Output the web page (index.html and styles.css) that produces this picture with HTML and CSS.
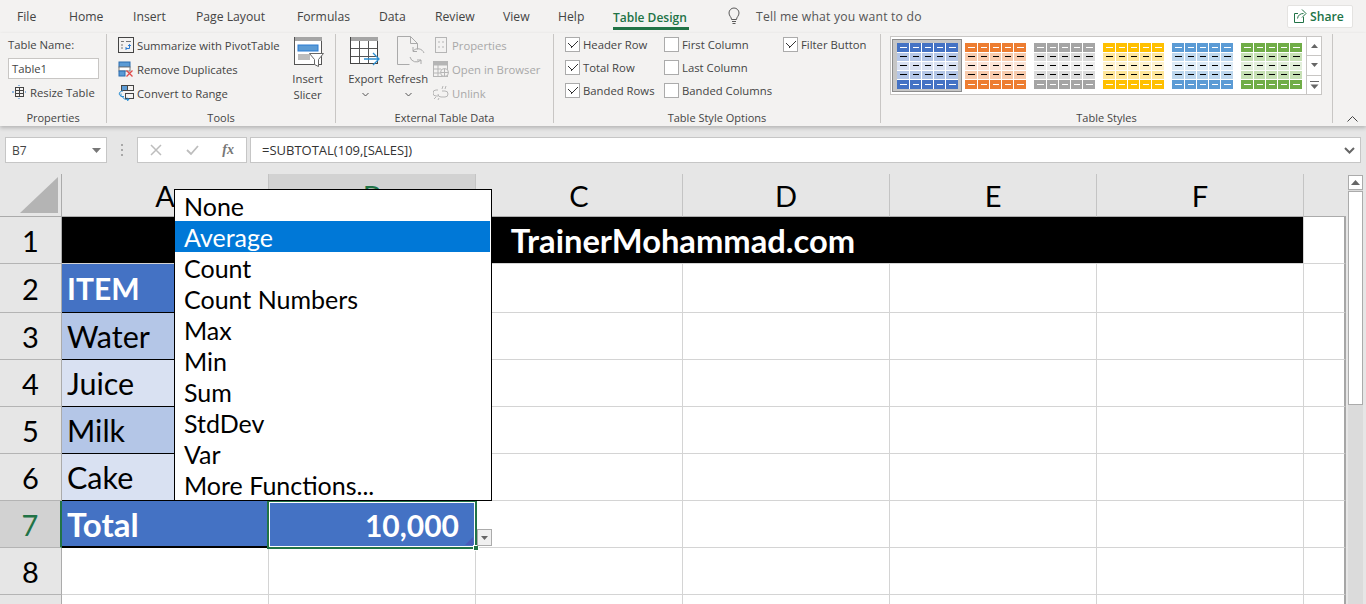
FILE: index.html
```html
<!DOCTYPE html>
<html lang="en">
<head>
  <meta charset="UTF-8">
  <meta name="viewport" content="width=device-width, initial-scale=1.0">
  <title>Table Design</title>
  <link rel="stylesheet" href="styles.css">
</head>
<body>
  <svg class="defs" width="0" height="0">
    <symbol id="swatch" viewBox="0 0 61 46">
      <rect width="61" height="46" fill="#fff"/>
      <g class="sw-head"><rect x="0" y="0" width="12" height="9"/><rect x="13" y="0" width="11" height="9"/><rect x="25" y="0" width="11" height="9"/><rect x="37" y="0" width="11" height="9"/><rect x="49" y="0" width="12" height="9"/></g>
      <g class="sw-band"><rect x="0" y="10" width="12" height="8"/><rect x="13" y="10" width="11" height="8"/><rect x="25" y="10" width="11" height="8"/><rect x="37" y="10" width="11" height="8"/><rect x="49" y="10" width="12" height="8"/></g>
      <g class="sw-light"><rect x="0" y="19" width="12" height="8"/><rect x="13" y="19" width="11" height="8"/><rect x="25" y="19" width="11" height="8"/><rect x="37" y="19" width="11" height="8"/><rect x="49" y="19" width="12" height="8"/></g>
      <g class="sw-band"><rect x="0" y="28" width="12" height="8"/><rect x="13" y="28" width="11" height="8"/><rect x="25" y="28" width="11" height="8"/><rect x="37" y="28" width="11" height="8"/><rect x="49" y="28" width="12" height="8"/></g>
      <g class="sw-head"><rect x="0" y="37" width="12" height="9"/><rect x="13" y="37" width="11" height="9"/><rect x="25" y="37" width="11" height="9"/><rect x="37" y="37" width="11" height="9"/><rect x="49" y="37" width="12" height="9"/></g>
      <path d="M3 4.500h7M16 4.500h6M28 4.500h6M40 4.500h6M52 4.500h7M3 41.500h7M16 41.500h6M28 41.500h6M40 41.500h6M52 41.500h7" stroke="#fff" fill="none"/>
      <path d="M3 13.500h7M16 13.500h6M28 13.500h6M40 13.500h6M52 13.500h7M3 22.500h7M16 22.500h6M28 22.500h6M40 22.500h6M52 22.500h7M3 31.500h7M16 31.500h6M28 31.500h6M40 31.500h6M52 31.500h7" stroke="#000" fill="none"/>
    </symbol>
  </svg>

  <nav class="tabs">
    <span class="tab tab-file">File</span>
    <span class="tab tab-home">Home</span>
    <span class="tab tab-insert">Insert</span>
    <span class="tab tab-layout">Page Layout</span>
    <span class="tab tab-formulas">Formulas</span>
    <span class="tab tab-data">Data</span>
    <span class="tab tab-review">Review</span>
    <span class="tab tab-view">View</span>
    <span class="tab tab-help">Help</span>
    <span class="tab tab-active">Table Design</span>
    <svg class="bulb" width="16" height="18" viewBox="0 0 16 18" fill="none" stroke="#5a5a5a"><path d="M5.500 12.500c0-2.500-2.500-3.500-2.500-6.500a5 5 0 0 1 10 0c0 3-2.500 4-2.500 6.500z"/><path d="M6 14.500h4M6.500 16.500h3"/></svg>
    <span class="tell">Tell me what you want to do</span>
    <span class="share">
      <svg width="13" height="14" viewBox="0 0 13 14" fill="none" stroke="#217346"><path d="M9.500 8v5.500H.5V4.500H4"/><path d="M3.500 9.500c.5-3.500 3-5 6-5"/><path d="M8 .5l4 4-4 4"/></svg>
      Share
    </span>
  </nav>

  <section class="ribbon">
    <div class="group group-props">
      <div class="group-body props-body">
        <span>Table Name:</span>
        <span class="name-input">Table1</span>
        <span class="cmd resize">
          <svg width="16" height="16" viewBox="0 0 16 16" fill="none" stroke="#444"><rect x="4.500" y="3.500" width="8" height="9"/><path d="M4.500 6.500h8M4.500 9.500h8M8.500 3.500v9"/><path d="M1 8h2M15 8h-1M8 1v1M8 15v-1" stroke="#2b7cd3"/></svg>
          Resize Table
        </span>
      </div>
      <div class="group-label">Properties</div>
    </div>

    <div class="group group-tools">
      <div class="group-body tools-body">
        <div class="cmd-list">
          <span class="cmd">
            <svg width="16" height="16" viewBox="0 0 16 16" fill="none" stroke="#444"><rect x=".5" y=".5" width="15" height="15"/><path d="M3 4.500h3M8 4.500h5M3 8h2M3 11h2" stroke="#777"/><path d="M8 11.500h3.500v-4M10 9l1.500-1.500L13 9M8 10v3" stroke="#2b7cd3"/></svg>
            Summarize with PivotTable
          </span>
          <span class="cmd">
            <svg width="16" height="16" viewBox="0 0 16 16"><rect x="1" y="1" width="11" height="5" fill="#5b9bd5" stroke="#2b6cb0"/><rect x="1" y="6" width="11" height="4" fill="#fff" stroke="#777"/><rect x="1" y="10" width="6" height="5" fill="#5b9bd5" stroke="#2b6cb0"/><path d="M8.500 9.500l6 6M14.500 9.500l-6 6" stroke="#e04b4b" stroke-width="1.300"/></svg>
            Remove Duplicates
          </span>
          <span class="cmd">
            <svg width="16" height="16" viewBox="0 0 16 16" fill="none"><rect x="3.500" y=".5" width="6" height="5" fill="#5b9bd5" stroke="#444"/><rect x="9.500" y=".5" width="6" height="5" stroke="#444"/><rect x="7.500" y="8.500" width="8" height="5" stroke="#444"/><path d="M5 6C1 6 0 10 3 11M3 8.500V11.500H6M4 11c1 3 4 4 7 3.500M9 12.500l2 2-2 1.500" stroke="#2b8fd3"/></svg>
            Convert to Range
          </span>
        </div>
        <div class="big-cmd slicer">
          <svg width="30" height="32" viewBox="0 0 30 32" fill="none"><rect x=".5" y="1.500" width="27" height="27" stroke="#555" fill="#fff"/><rect x="1" y="1" width="27" height="4" fill="#a5a5a5"/><rect x="4" y="9" width="20" height="6" fill="#5b9bd5" stroke="#2b7cd3"/><rect x="4" y="18" width="12" height="6" fill="#bdbdbd"/><path d="M15.500 17.500h14l-5 6v7l-4-2v-5z" fill="#fff" stroke="#666"/></svg>
          <span>Insert</span>
          <span>Slicer</span>
        </div>
      </div>
      <div class="group-label">Tools</div>
    </div>

    <div class="group group-external">
      <div class="group-body external-body">
        <div class="big-cmd export">
          <svg width="31" height="30" viewBox="0 0 31 30" fill="none"><rect x=".5" y="1.500" width="27" height="26" stroke="#444" fill="#fff"/><rect x="1" y="1" width="27" height="4" fill="#a5a5a5"/><path d="M9.500 5v22M18.500 5v22M1 12.500h26M1 20.500h26" stroke="#555"/><path d="M14 23h15M23 17l6 6-6 6" stroke="#2b8fd3" stroke-width="1.300"/></svg>
          <span>Export</span>
          <svg class="chev" width="7" height="5" viewBox="0 0 7 5" fill="none" stroke="#555"><path d="M.5 1l3 3 3-3"/></svg>
        </div>
        <div class="big-cmd refresh">
          <svg class="refresh-icon" width="29" height="30" viewBox="0 0 29 30" fill="none" stroke="#aaa"><path d="M.5 28.500V.5h13l7 7v6M13.500.5v7h7M.5 28.500h12"/><path d="M27 17a6.500 6.500 0 0 0-11-2M13 21a6.500 6.500 0 0 0 11 3M16 11v4.500h4M24 28v-4h-4"/></svg>
          <span>Refresh</span>
          <svg class="chev" width="7" height="5" viewBox="0 0 7 5" fill="none" stroke="#555"><path d="M.5 1l3 3 3-3"/></svg>
        </div>
        <div class="cmd-list muted">
          <span class="cmd">
            <svg width="16" height="16" viewBox="0 0 16 16" fill="none" stroke="#b5b5b5"><rect x="2.500" y=".5" width="11" height="15"/><path d="M5 5h2M9 5h2M5 10h2M9 10h2"/></svg>
            Properties
          </span>
          <span class="cmd">
            <svg width="16" height="16" viewBox="0 0 16 16" fill="none" stroke="#b5b5b5"><rect x=".5" y=".5" width="14" height="15"/><rect x="1" y="1" width="13" height="3" fill="#b5b5b5"/><path d="M5 4v11M1 8h7M1 12h6"/><circle cx="11.500" cy="11.500" r="4" fill="#f3f2f1"/><path d="M7.500 11.500h8M11.500 7.500v8"/></svg>
            Open in Browser
          </span>
          <span class="cmd">
            <svg width="16" height="16" viewBox="0 0 16 16" fill="none" stroke="#b5b5b5"><path d="M5 5H3a3 3 0 0 0 0 6h2M9 6h3a3 3 0 0 1 0 6H8a3 3 0 0 1-3-3"/><path d="M10 1l-1 3M13 1l-1 3M1 14l2-2M5 15l1-2"/></svg>
            Unlink
          </span>
        </div>
      </div>
      <div class="group-label">External Table Data</div>
    </div>

    <div class="group group-options">
      <div class="group-body options-body">
        <span class="check on">Header Row</span>
        <span class="check">First Column</span>
        <span class="check on">Filter Button</span>
        <span class="check on">Total Row</span>
        <span class="check">Last Column</span>
        <span></span>
        <span class="check on">Banded Rows</span>
        <span class="check">Banded Columns</span>
      </div>
      <div class="group-label">Table Style Options</div>
    </div>

    <div class="group group-styles">
      <div class="group-body styles-body">
        <div class="gallery">
          <div class="swatches">
            <span class="swatch selected blue"><svg width="61" height="46"><use href="#swatch"/></svg></span>
            <span class="swatch orange"><svg width="61" height="46"><use href="#swatch"/></svg></span>
            <span class="swatch gray"><svg width="61" height="46"><use href="#swatch"/></svg></span>
            <span class="swatch gold"><svg width="61" height="46"><use href="#swatch"/></svg></span>
            <span class="swatch sky"><svg width="61" height="46"><use href="#swatch"/></svg></span>
            <span class="swatch green"><svg width="61" height="46"><use href="#swatch"/></svg></span>
          </div>
          <div class="gallery-btns">
            <span><svg width="7" height="4" viewBox="0 0 7 4"><path d="M3.500 0L7 4H0z" fill="#666"/></svg></span>
            <span><svg width="7" height="4" viewBox="0 0 7 4"><path d="M0 0h7L3.500 4z" fill="#666"/></svg></span>
            <span><svg width="9" height="8" viewBox="0 0 9 8"><path d="M0 0h9v1H0z" fill="#666"/><path d="M.5 3.500h8L4.500 8z" fill="#666"/></svg></span>
          </div>
        </div>
      </div>
      <div class="group-label">Table Styles</div>
    </div>

    <svg class="collapse" width="11" height="6" viewBox="0 0 11 6" fill="none" stroke="#444"><path d="M.5 5.500l5-5 5 5"/></svg>
  </section>

  <section class="formula-bar">
    <div class="name-box">B7<svg width="9" height="5" viewBox="0 0 9 5"><path d="M0 0h9L4.500 5z" fill="#777"/></svg></div>
    <span class="grip"></span>
    <div class="fx-box">
      <svg width="12" height="12" viewBox="0 0 12 12" fill="none" stroke="#bdbdbd" stroke-width="1.500"><path d="M1 1l10 10M11 1L1 11"/></svg>
      <svg width="13" height="12" viewBox="0 0 13 12" fill="none" stroke="#bdbdbd" stroke-width="1.800"><path d="M1 6l4 4 7-8"/></svg>
      <i class="fx">fx</i>
    </div>
    <div class="formula">=SUBTOTAL(109,[SALES])<svg width="11" height="7" viewBox="0 0 11 7" fill="none" stroke="#666" stroke-width="2"><path d="M1 1l4.500 4.500L10 1"/></svg></div>
  </section>

  <main class="sheet">
    <div class="sheet-grid">
      <table class="cells">
        <colgroup><col class="c-head"><col class="c-col"><col class="c-col"><col class="c-col"><col class="c-col"><col class="c-col"><col class="c-col"><col class="c-rest"></colgroup>
        <tr class="r-head">
          <th class="corner"><svg width="38" height="36" viewBox="0 0 38 36"><path d="M38 0v36H0z" fill="#b4b4b4"/></svg></th>
          <th>A</th><th class="col-sel">B</th><th>C</th><th>D</th><th>E</th><th>F</th><th class="blank"></th>
        </tr>
        <tr class="r-1"><th>1</th><td class="title" colspan="6">TrainerMohammad.com</td><td></td></tr>
        <tr class="r-2"><th>2</th><td class="t-head">ITEM</td><td class="t-head"></td><td></td><td></td><td></td><td></td><td></td></tr>
        <tr><th>3</th><td class="band">Water</td><td class="band"></td><td></td><td></td><td></td><td></td><td></td></tr>
        <tr><th>4</th><td class="light">Juice</td><td class="light"></td><td></td><td></td><td></td><td></td><td></td></tr>
        <tr><th>5</th><td class="band">Milk</td><td class="band"></td><td></td><td></td><td></td><td></td><td></td></tr>
        <tr><th>6</th><td class="light">Cake</td><td class="light"></td><td></td><td></td><td></td><td></td><td></td></tr>
        <tr><th class="row-sel">7</th><td class="t-total">Total</td><td class="t-total amount">10,000<span class="corner-mark"></span><span class="handle"></span><span class="filter"><svg width="7" height="4" viewBox="0 0 7 4"><path d="M0 0h7L3.500 4z" fill="#666"/></svg></span></td><td></td><td></td><td></td><td></td><td></td></tr>
        <tr><th>8</th><td></td><td></td><td></td><td></td><td></td><td></td><td></td></tr>
        <tr><th></th><td></td><td></td><td></td><td></td><td></td><td></td><td></td></tr>
      </table>

      <ul class="total-menu">
        <li>None</li>
        <li class="hover">Average</li>
        <li>Count</li>
        <li>Count Numbers</li>
        <li>Max</li>
        <li>Min</li>
        <li>Sum</li>
        <li>StdDev</li>
        <li>Var</li>
        <li>More Functions...</li>
      </ul>
    </div>

    <aside class="scrollbar">
      <span class="scroll-up"><svg width="9" height="5" viewBox="0 0 9 5"><path d="M4.500 0L9 5H0z" fill="#666"/></svg></span>
      <span class="scroll-thumb"></span>
    </aside>
  </main>
</body>
</html>
```

FILE: styles.css
```css
* {
  box-sizing: border-box;
}

html, body {
  height: 604px;
  overflow: hidden;
}

body {
  margin: 0;
  font-family: "Open Sans", "Noto Sans", sans-serif;
  font-size: 11.3px;
  color: #444;
  background-color: #e6e6e6;
}

.defs {
  position: absolute;
}

/* title row with the tabs */
.tabs {
  display: flex;
  align-items: center;
  height: 33px;
  padding-left: 17px;
  padding-bottom: 1px;
  background-color: #f3f2f1;
  font-size: 12.2px;
}

.tab {
  flex: none;
  white-space: nowrap;
}

.tab-file { width: 52px; }
.tab-home { width: 64px; }
.tab-insert { width: 63px; }
.tab-layout { width: 101px; }
.tab-formulas { width: 82px; }
.tab-data { width: 56px; }
.tab-review { width: 68px; }
.tab-view { width: 55px; }
.tab-help { width: 55px; }

.tab-active {
  width: 76px;
  height: 27px;
  margin-top: 1px;
  padding-top: 6px;
  border-bottom: 3px solid #217346;
  color: #217346;
  font-weight: 600;
  font-size: 12px;
}

.bulb {
  flex: none;
  margin-left: 37px;
}

.tell {
  margin-left: 14px;
  letter-spacing: .2px;
  color: #555;
}

.share {
  display: flex;
  align-items: center;
  gap: 3px;
  width: 66px;
  height: 23px;
  margin-left: auto;
  margin-right: 13px;
  padding-left: 6px;
  background-color: #fff;
  border: 1px solid #e4e3e1;
  border-radius: 2px;
  color: #217346;
  font-weight: 600;
}

/* ribbon */
.ribbon {
  position: relative;
  display: flex;
  height: 93px;
  background-color: #f3f2f1;
  box-shadow: 0 2px 4px rgba(0, 0, 0, .22);
}

.group {
  flex: none;
  display: flex;
  flex-direction: column;
  height: 89px;
  margin-top: 1px;
  border-right: 1px solid #c8c6c4;
}

.group-body {
  flex: 1;
}

.group-label {
  height: 12px;
  text-align: center;
  font-size: 11px;
  line-height: 14px;
}

.group-props { width: 107px; }
.group-tools { width: 229px; }
.group-external { width: 218px; }
.group-options { width: 327px; }
.group-styles { width: 452px; }

.props-body {
  display: flex;
  flex-direction: column;
  padding: 3px 0 0 8px;
}

.name-input {
  width: 91px;
  height: 21px;
  margin-top: 6px;
  padding: 2px 3px;
  background-color: #fff;
  border: 1px solid #c8c6c4;
}

.cmd {
  display: flex;
  align-items: center;
  gap: 3px;
  height: 24px;
  white-space: nowrap;
}

.resize {
  margin: 1px 0 0 3px;
}

.tools-body {
  display: flex;
  padding-left: 11px;
}

.cmd-list {
  display: flex;
  flex-direction: column;
  margin-top: -1px;
}

.big-cmd {
  display: flex;
  flex-direction: column;
  align-items: center;
  line-height: 16px;
}

.big-cmd svg {
  margin-bottom: 5px;
}

.slicer {
  margin-left: 12px;
  padding-top: 2px;
}

.slicer svg {
  margin: 0 0 3px 2px;
}

.external-body {
  display: flex;
  padding: 2px 0 0 11px;
}

.export {
  width: 37px;
}

.refresh {
  width: 44px;
  margin-left: 2px;
}

.big-cmd .refresh-icon {
  margin-left: 6px;
}

.big-cmd .chev {
  margin: 5px 0 0;
}

.muted {
  margin: -3px 0 0 3px;
  color: #a8a8a8;
}

.options-body {
  display: grid;
  grid-template-columns: 99px 119px auto;
  grid-auto-rows: 23px;
  align-content: start;
  margin-top: -1px;
  padding: 0 0 0 11px;
}

.check {
  display: flex;
  align-items: center;
  gap: 3px;
  white-space: nowrap;
}

.check::before {
  content: "";
  flex: none;
  width: 13px;
  height: 13px;
  background: #fff center no-repeat;
  border: 1px solid #ababab;
}

.check.on::before {
  background-image: linear-gradient(45deg, transparent 38%, #333 38%, #333 48%, transparent 48%), linear-gradient(-45deg, transparent 38%, #333 38%, #333 48%, transparent 48%);
  background-size: 5px 5px, 8px 8px;
  background-position: 2px 4px, 4px 2px;
}

.styles-body {
  padding: 2px 0 0 9px;
}

.gallery {
  display: flex;
  width: 432px;
  height: 59px;
  background-color: #fff;
  border: 1px solid #c8c6c4;
}

.swatches {
  display: flex;
  flex: 1;
  gap: 8px;
  padding: 2px 0 0 1px;
}

.swatch {
  display: flex;
  flex: none;
  align-items: center;
  justify-content: center;
  width: 61px;
  height: 53px;
}

.swatch.selected {
  width: 70px;
  margin-right: -5px;
  background-color: #c6c6c6;
  border: 1px solid #8c8c8c;
}

.blue { --head: #4472c4; --band: #b4c6e7; --light: #d9e1f2; }
.orange { --head: #ed7d31; --band: #f8cbad; --light: #fce4d6; }
.gray { --head: #a5a5a5; --band: #dbdbdb; --light: #ededed; }
.gold { --head: #ffc000; --band: #ffe699; --light: #fff2cc; }
.sky { --head: #5b9bd5; --band: #bdd7ee; --light: #ddebf7; }
.green { --head: #70ad47; --band: #c6e0b4; --light: #e2efda; }

.sw-head { fill: var(--head); }
.sw-band { fill: var(--band); }
.sw-light { fill: var(--light); }

.gallery-btns {
  display: flex;
  flex: none;
  flex-direction: column;
  width: 15px;
  border-left: 1px solid #c8c6c4;
}

.gallery-btns span {
  display: flex;
  align-items: center;
  justify-content: center;
  flex: 1;
  border-bottom: 1px solid #c8c6c4;
}

.gallery-btns span:last-child {
  border-bottom: 0;
}

.collapse {
  position: absolute;
  right: 8px;
  bottom: 4px;
}

/* formula bar */
.formula-bar {
  display: flex;
  height: 26px;
  margin: 11px 5px 0;
}

.name-box, .fx-box, .formula {
  display: flex;
  align-items: center;
  background-color: #fff;
  border: 1px solid #c6c6c6;
}

.name-box {
  justify-content: space-between;
  width: 102px;
  padding: 0 5px 0 6px;
  font-size: 12px;
}

.grip {
  width: 2px;
  height: 13px;
  margin: 7px 14px 0;
  background: repeating-linear-gradient(#a8a8a8 0 2px, transparent 2px 5px);
}

.fx-box {
  justify-content: space-between;
  width: 110px;
  padding: 0 12px 0 12px;
}

.fx {
  font-family: "Liberation Serif", serif;
  font-size: 14px;
  font-weight: bold;
  color: #777;
}

.formula {
  flex: 1;
  justify-content: space-between;
  margin-left: 3px;
  padding: 0 5px 0 11px;
  font-size: 13px;
  color: #333;
}

/* worksheet */
.sheet {
  display: flex;
  margin-top: 11px;
}

.sheet-grid {
  position: relative;
  width: 1346px;
  height: 430px;
  overflow: hidden;
}

.cells {
  table-layout: fixed;
  width: 1346px;
  border-collapse: separate;
  border-spacing: 0;
  background-color: #fff;
  font-family: Lato, "Liberation Sans", sans-serif;
  font-size: 29px;
  color: #000;
}

.c-head { width: 62px; }
.c-col { width: 207px; }
.c-rest { width: 42px; }

.cells tr {
  height: 47px;
}

.cells .r-head {
  height: 43px;
}

.cells .r-2 {
  height: 49px;
}

.cells th {
  padding: 0;
  background-color: #e6e6e6;
  border-right: 1px solid #ababab;
  border-bottom: 1px solid #b4b4b4;
  font-weight: normal;
}

.r-head th {
  border-right-color: #c4c4c4;
  border-bottom-color: #ababab;
}

.cells .corner {
  border-right-color: #ababab;
  vertical-align: middle;
  text-align: right;
  padding-right: 3px;
}

.corner svg {
  display: block;
  margin-left: auto;
}

.cells .col-sel {
  background-color: #d2d2d2;
  color: #217346;
}

.cells .row-sel {
  background-color: #d2d2d2;
  border-right: 2px solid #217346;
  color: #217346;
}

.cells .blank {
  border-right: 0;
}

.cells td {
  padding: 0 5px;
  border-right: 1px solid #d4d4d4;
  border-bottom: 1px solid #d4d4d4;
  white-space: nowrap;
  font-size: 30.5px;
}

.cells td:last-child {
  border-right: 2px solid #a6a6a6;
}

.cells .title {
  padding: 0 0 0 1px;
  background-color: #000;
  text-align: center;
  color: #fff;
  font-size: 32.7px;
  font-weight: bold;
}

.cells .t-head,
.cells .t-total {
  background-color: #4472c4;
  border-right: 0;
  border-bottom-color: #000;
  color: #fff;
  font-size: 30px;
  font-weight: bold;
}

.cells .band,
.cells .light {
  border-right-color: #000;
  border-bottom-color: #000;
}

.cells .band { background-color: #b4c6e7; }
.cells .light { background-color: #d9e1f2; }

.cells .t-total {
  border-bottom: 2px solid #000;
  font-size: 33px;
}

.cells .amount {
  position: relative;
  padding-right: 17px;
  text-align: right;
  border-bottom: 0;
  font-size: 30px;
}

/* selection frame of the active cell */
.cells .amount::after {
  content: "";
  position: absolute;
  top: -1px;
  right: -1px;
  bottom: -1px;
  left: -2px;
  border: 2px solid #217346;
  box-shadow: inset 0 0 0 1px #fff;
}

.corner-mark {
  position: absolute;
  right: 3px;
  bottom: 3px;
  border-style: solid;
  border-width: 0 0 8px 8px;
  border-color: transparent transparent #4a5ab8 transparent;
}

.handle {
  position: absolute;
  z-index: 1;
  right: -3px;
  bottom: -3px;
  width: 6px;
  height: 6px;
  background-color: #217346;
  border: 1px solid #fff;
}

.filter {
  position: absolute;
  z-index: 1;
  left: 100%;
  bottom: 2px;
  margin-left: 1px;
  display: flex;
  align-items: center;
  justify-content: center;
  width: 15px;
  height: 17px;
  background-color: #f0f0f0;
  border: 1px solid #ababab;
}

.total-menu {
  position: absolute;
  z-index: 2;
  top: 15px;
  left: 174px;
  width: 318px;
  margin: 0;
  padding: 0;
  list-style: none;
  background-color: #fff;
  border: 1px solid #000;
  font-family: Lato, "Liberation Sans", sans-serif;
  font-size: 25px;
  color: #000;
}

.total-menu li {
  height: 31px;
  margin-right: 1px;
  padding: 1px 0 0 9px;
  line-height: 30px;
  white-space: nowrap;
}

.total-menu .hover {
  background-color: #0078d7;
  color: #fff;
}

.scrollbar {
  display: flex;
  flex-direction: column;
  width: 15px;
  height: 430px;
  margin: 1px 0 0 2px;
  background-color: #dbdbdb;
}

.scroll-up {
  display: flex;
  align-items: center;
  justify-content: center;
  height: 15px;
  background-color: #fff;
  border: 1px solid #ababab;
}

.scroll-thumb {
  height: 214px;
  margin-top: 1px;
  background-color: #fff;
  border: 1px solid #ababab;
}
```
